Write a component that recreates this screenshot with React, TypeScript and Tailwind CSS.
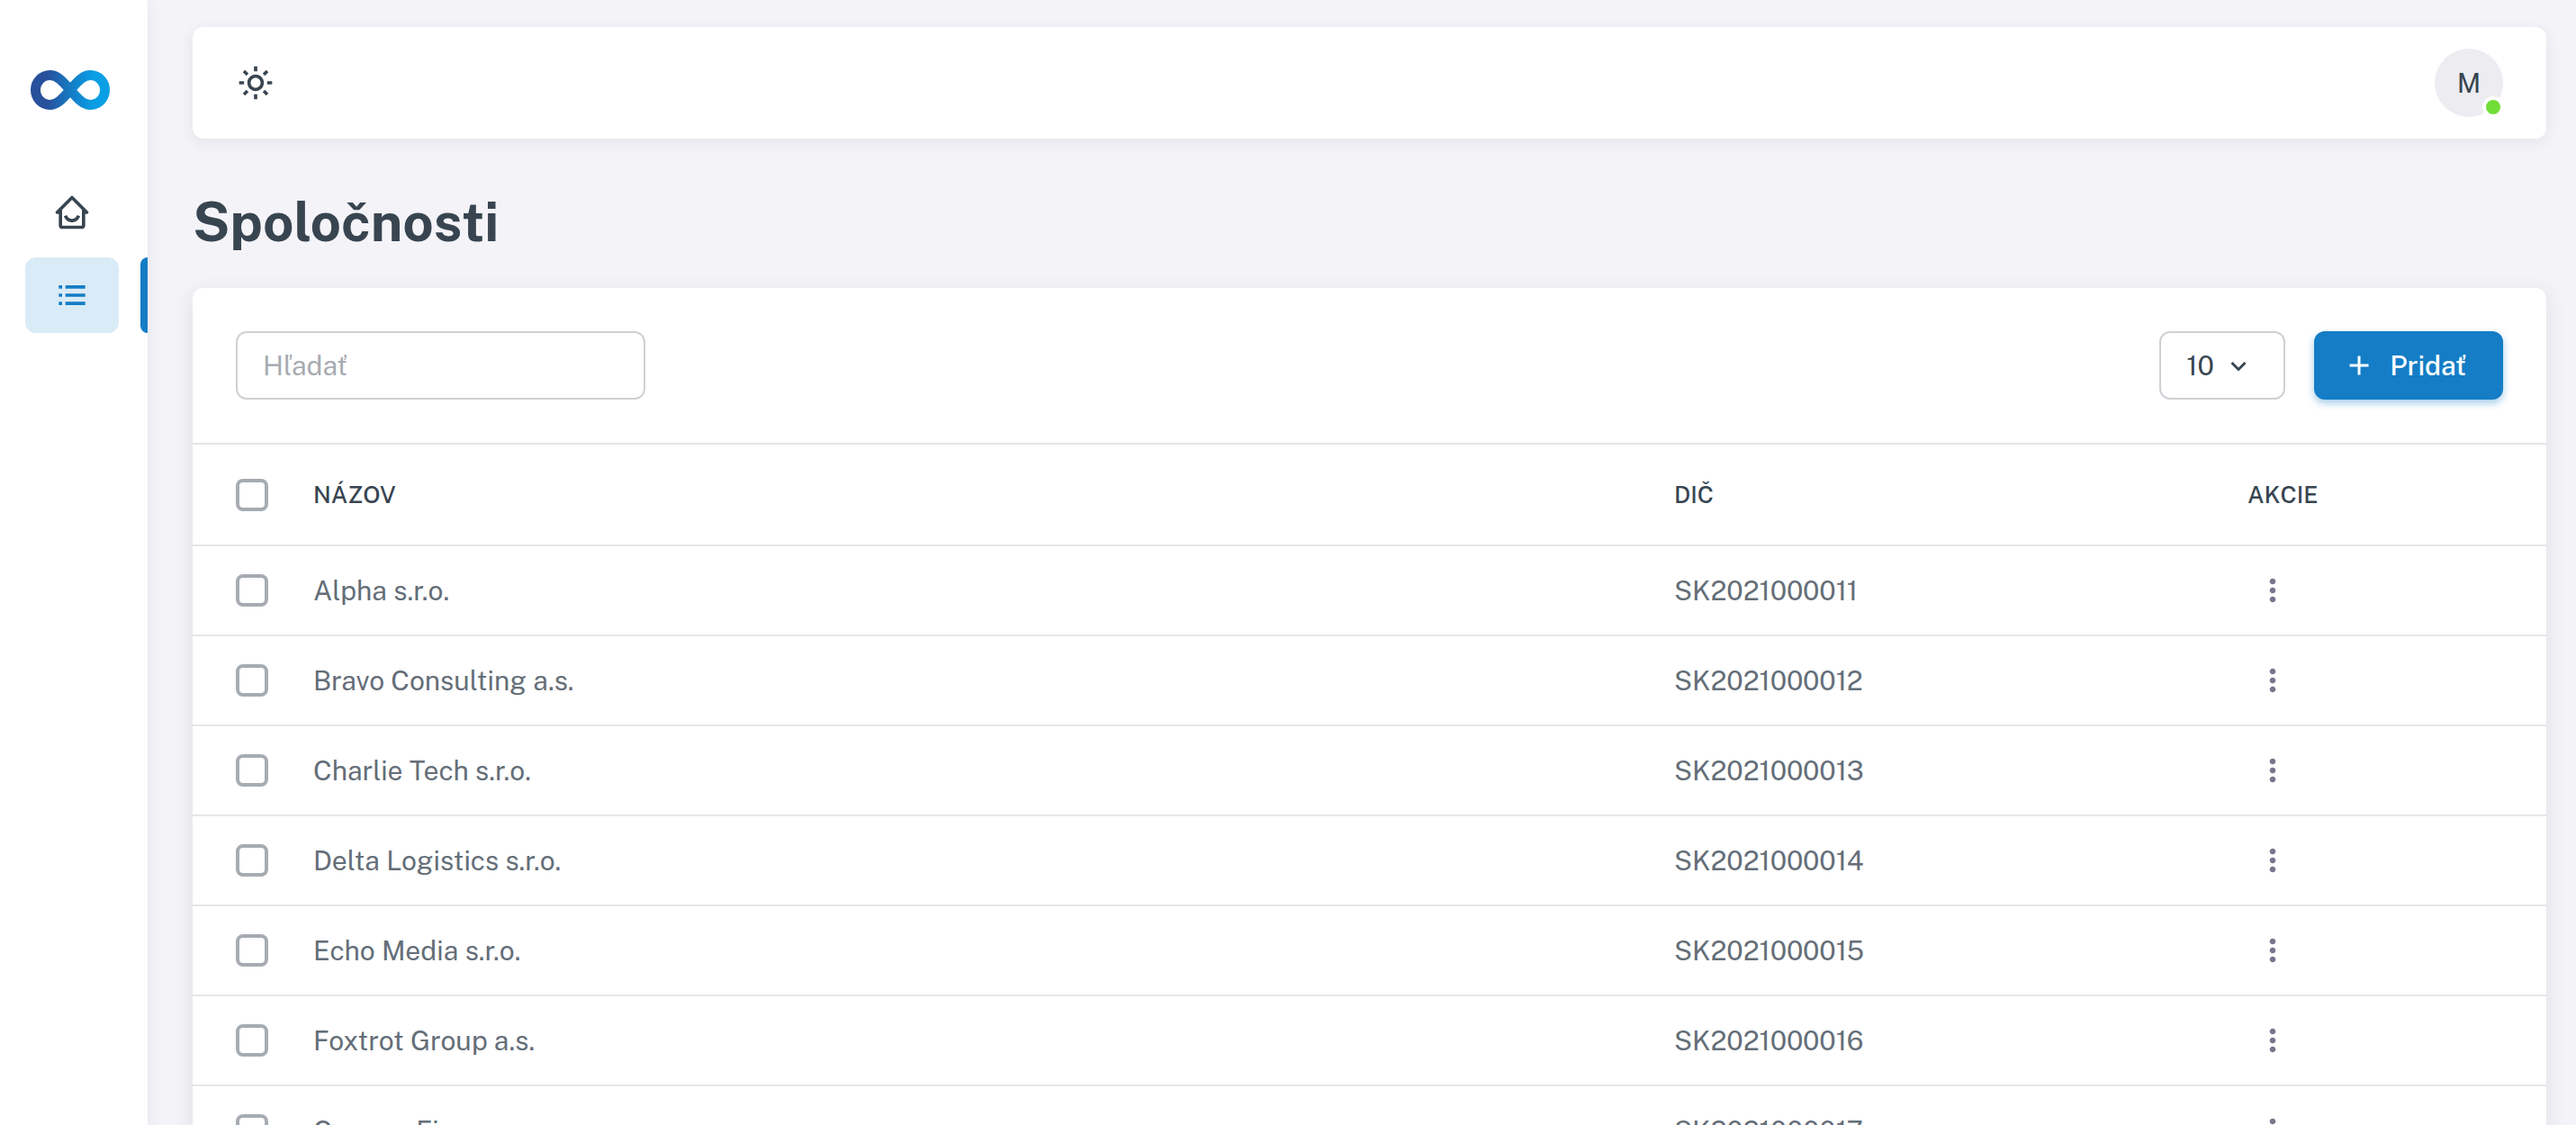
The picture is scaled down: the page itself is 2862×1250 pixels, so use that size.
import { useState } from "react";
import {
  BiChevronDown,
  BiDotsVerticalRounded,
  BiHomeSmile,
  BiListUl,
  BiPlus,
  BiSun,
} from "react-icons/bi";

const companies = [
  { name: "Alpha s.r.o.", taxId: "SK2021000011" },
  { name: "Bravo Consulting a.s.", taxId: "SK2021000012" },
  { name: "Charlie Tech s.r.o.", taxId: "SK2021000013" },
  { name: "Delta Logistics s.r.o.", taxId: "SK2021000014" },
  { name: "Echo Media s.r.o.", taxId: "SK2021000015" },
  { name: "Foxtrot Group a.s.", taxId: "SK2021000016" },
  { name: "Gamma Finance s.r.o.", taxId: "SK2021000017" },
];

function Logo() {
  return (
    <svg viewBox="0 0 88 44" className="h-11 w-22" fill="none" aria-hidden="true">
      <defs>
        <linearGradient id="logo" gradientUnits="userSpaceOnUse" x1="0" y1="0" x2="88" y2="0">
          <stop offset="0.2" stopColor="#29509b" />
          <stop offset="0.52" stopColor="#147dc6" />
          <stop offset="0.8" stopColor="#0a9fe5" />
        </linearGradient>
      </defs>
      <path
        d="M44 22C36 13 30 5.5 21.500 5.500A16 16.500 0 0 0 21.500 38.500C30 38.500 36 31 44 22C52 13 58 5.500 66.500 5.500A16 16.500 0 0 1 66.500 38.500C58 38.500 52 31 44 22Z"
        stroke="url(#logo)"
        strokeWidth="11"
      />
    </svg>
  );
}

function Checkbox({ label }: { label: string }) {
  return (
    <input
      type="checkbox"
      aria-label={label}
      className="block size-9 appearance-none rounded-lg border-4 border-[#a7acb2] bg-white checked:border-[#147dc6] checked:bg-[#147dc6]"
    />
  );
}

function Sidebar() {
  return (
    <aside className="z-10 flex w-41 shrink-0 flex-col bg-white shadow-[0_4px_16px_rgba(34,48,62,0.08)]">
      <a href="#" aria-label="Domov" className="mt-[78px] ml-[34px] self-start">
        <Logo />
      </a>
      <nav className="mt-[72px] flex flex-col gap-2">
        <a
          href="#"
          aria-label="Prehľad"
          className="mr-8 ml-7 flex h-21 items-center justify-center rounded-xl text-[#384551]"
        >
          <BiHomeSmile className="size-11" />
        </a>
        <div className="flex justify-between pl-7">
          <a
            href="#"
            aria-label="Spoločnosti"
            aria-current="page"
            className="flex h-21 w-26 items-center justify-center rounded-xl bg-[#d9ebf6] text-[#147dc6]"
          >
            <BiListUl className="size-11" />
          </a>
          <span className="w-2 rounded-l-lg bg-[#147dc6]" />
        </div>
      </nav>
    </aside>
  );
}

function Topbar() {
  return (
    <header className="flex h-31 items-center justify-between rounded-xl bg-white px-12 shadow-[0_4px_16px_rgba(34,48,62,0.08)]">
      <button type="button" aria-label="Prepnúť tému" className="text-[#384551]">
        <BiSun className="size-11" />
      </button>
      <button
        type="button"
        className="relative size-19 rounded-full bg-[#edecf1] text-3xl text-[#384551]"
      >
        M
        <span className="absolute -right-px -bottom-px size-6 rounded-full border-4 border-white bg-[#71dd37]" />
      </button>
    </header>
  );
}

function Toolbar() {
  const [pageSize, setPageSize] = useState("10");
  return (
    <div className="flex items-center justify-between px-12 py-12">
      <input
        type="search"
        aria-label="Hľadať"
        placeholder="Hľadať"
        className="h-19 w-[455px] rounded-xl border-2 border-[#ced1d5] bg-white px-7 text-3xl text-[#384551] placeholder:text-[#a7acb2]"
      />
      <div className="flex items-center gap-8">
        <div className="relative">
          <select
            aria-label="Počet riadkov"
            value={pageSize}
            onChange={(event) => setPageSize(event.target.value)}
            className="h-19 w-35 appearance-none rounded-xl border-2 border-[#ced1d5] bg-white pl-7 text-3xl text-[#384551]"
          >
            <option>10</option>
            <option>25</option>
            <option>50</option>
          </select>
          <BiChevronDown className="pointer-events-none absolute top-5 right-[34px] size-9 text-[#384551]" />
        </div>
        <button
          type="button"
          className="flex h-19 items-center gap-4 rounded-xl bg-[#147dc6] pr-10 pl-8 text-3xl font-medium text-white shadow-[0_4px_8px_rgba(20,125,198,0.4)]"
        >
          <BiPlus className="size-9" />
          Pridať
        </button>
      </div>
    </div>
  );
}

function CompanyTable() {
  return (
    <table className="w-full table-fixed text-left">
      <colgroup>
        <col className="w-[94px]" />
        <col />
        <col className="w-[637px]" />
        <col className="w-[372px]" />
      </colgroup>
      <thead>
        <tr className="h-[113px] border-y-2 border-[#e4e6e8] text-[26px] text-[#384551]">
          <th className="pl-12">
            <Checkbox label="Vybrať všetko" />
          </th>
          <th className="px-10 font-medium">NÁZOV</th>
          <th className="px-10 font-medium">DIČ</th>
          <th className="px-10 font-medium">AKCIE</th>
        </tr>
      </thead>
      <tbody>
        {companies.map((company) => (
          <tr
            key={company.taxId}
            className="h-25 border-b-2 border-[#e4e6e8] text-3xl text-[#646e78]"
          >
            <td className="pl-12">
              <Checkbox label={`Vybrať ${company.name}`} />
            </td>
            <td className="px-10">{company.name}</td>
            <td className="px-10">{company.taxId}</td>
            <td className="px-10">
              <button
                type="button"
                aria-label={`Akcie pre ${company.name}`}
                className="ml-2 flex size-10 items-center justify-center text-[#76778c]"
              >
                <BiDotsVerticalRounded className="size-10" />
              </button>
            </td>
          </tr>
        ))}
      </tbody>
    </table>
  );
}

export default function App() {
  return (
    <div className="flex h-screen overflow-hidden bg-[#f4f3f8] font-['Public_Sans','Inter',sans-serif]">
      <Sidebar />
      <div className="min-w-0 flex-1 pt-[30px] pr-[33px] pl-[50px]">
        <Topbar />
        <main>
          <h1 className="mt-[54px] mb-[34px] text-6xl leading-[78px] font-bold text-[#384551]">
            Spoločnosti
          </h1>
          <section className="rounded-xl bg-white shadow-[0_6px_24px_rgba(34,48,62,0.1)]">
            <Toolbar />
            <CompanyTable />
          </section>
        </main>
      </div>
    </div>
  );
}
